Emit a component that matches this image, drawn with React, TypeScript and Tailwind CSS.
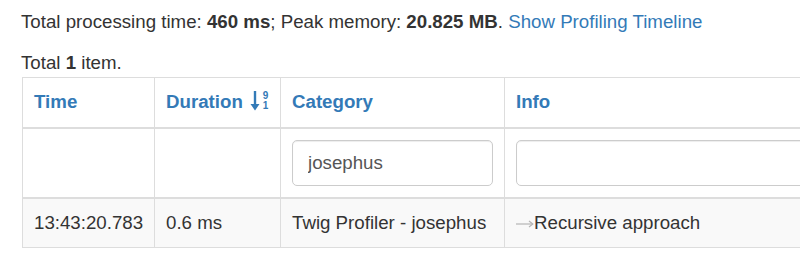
import React from "react";

const SortIcon = () => (
  <span className="inline-flex items-start ml-[7px] align-[-3px]">
    <svg width="10" height="20" viewBox="0 0 10 20" className="block">
      <path d="M5 0 V16" stroke="#337ab7" strokeWidth="2.4" />
      <path d="M0.5 13 L5 19.5 L9.5 13 Z" fill="#337ab7" />
    </svg>
    <span className="flex flex-col ml-[3px] text-[10px] leading-[10px] font-bold text-[#337ab7]">
      <span>9</span>
      <span>1</span>
    </span>
  </span>
);

const inputCls =
  "block w-full h-[46px] px-[15px] border border-[#ccc] rounded-[5px] text-[18.7px] text-[#555] bg-white shadow-[inset_0_1px_1px_rgba(0,0,0,0.075)] outline-none";

export default function App() {
  return (
    <div
      className="w-[800px] h-[258px] overflow-hidden bg-white text-[#333] text-[18.7px] leading-[26px]"
      style={{ fontFamily: '"Liberation Sans", Arial, sans-serif' }}
    >
      <div className="pl-[21px] pt-[9px]">
        <p className="whitespace-nowrap">
          Total processing time: <b>460 ms</b>; Peak memory: <b>20.825 MB</b>.{" "}
          <a className="text-[#337ab7]">Show Profiling Timeline</a>
        </p>
        <div className="mt-[15px] whitespace-nowrap">
          Total <b>1</b> item.
        </div>
      </div>
      <div className="pl-[22px] mt-[1px]">
        <table className="w-[1100px] border-collapse border border-[#ddd] table-fixed">
          <colgroup>
            <col className="w-[132px]" />
            <col className="w-[126px]" />
            <col className="w-[224px]" />
            <col />
          </colgroup>
          <thead>
            <tr className="text-left text-[#337ab7] font-bold">
              <th className="border border-[#ddd] border-b-2 px-[11px] py-[11px] h-[50px] align-middle">Time</th>
              <th className="border border-[#ddd] border-b-2 px-[11px] py-[11px] align-middle whitespace-nowrap">
                Duration
                <SortIcon />
              </th>
              <th className="border border-[#ddd] border-b-2 px-[11px] py-[11px] align-middle">Category</th>
              <th className="border border-[#ddd] border-b-2 px-[11px] py-[11px] align-middle">Info</th>
            </tr>
            <tr>
              <td className="border border-[#ddd] border-b-2 px-[11px] py-[11px]"></td>
              <td className="border border-[#ddd] border-b-2 px-[11px] py-[11px]"></td>
              <td className="border border-[#ddd] border-b-2 px-[11px] py-[11px]">
                <input
                  readOnly
                  value="josephus"
                  className={inputCls}
                  style={{ fontFamily: '"Liberation Sans", Arial, sans-serif' }}
                />
              </td>
              <td className="border border-[#ddd] border-b-2 px-[11px] py-[11px]">
                <input readOnly value="" className={inputCls} />
              </td>
            </tr>
          </thead>
          <tbody>
            <tr className="bg-[#f9f9f9]">
              <td className="border border-[#ddd] px-[11px] py-[11px] whitespace-nowrap">13:43:20.783</td>
              <td className="border border-[#ddd] px-[11px] py-[11px] whitespace-nowrap">0.6 ms</td>
              <td className="border border-[#ddd] px-[11px] py-[11px] whitespace-nowrap">Twig Profiler - josephus</td>
              <td className="border border-[#ddd] px-[11px] py-[11px] whitespace-nowrap">
                <span className="inline-flex items-center">
                  <svg width="18" height="10" viewBox="0 0 18 10" className="block mt-[1px]">
                    <path d="M0 5 H16.5" stroke="#b5b5b5" strokeWidth="1.2" />
                    <path d="M13 2 L16.8 5 L13 8" stroke="#b5b5b5" strokeWidth="1.2" fill="none" />
                  </svg>
                  <span>Recursive approach</span>
                </span>
              </td>
            </tr>
          </tbody>
        </table>
      </div>
    </div>
  );
}
